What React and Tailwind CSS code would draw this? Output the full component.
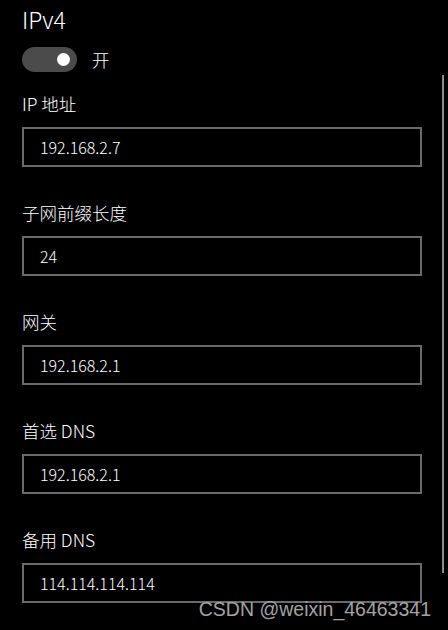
export default function App() {
  const fields = [
    { label: "IP 地址", value: "192.168.2.7" },
    { label: "子网前缀长度", value: "24" },
    { label: "网关", value: "192.168.2.1" },
    { label: "首选 DNS", value: "192.168.2.1" },
    { label: "备用 DNS", value: "114.114.114.114" },
  ];
  const font = { fontFamily: '"Noto Sans CJK SC", "Noto Sans", sans-serif' };
  return (
    <div className="relative w-[448px] h-[630px] bg-black overflow-hidden text-white font-light" style={font}>
      <div className="pl-[22px] pt-[3px] flex flex-col">
        <div className="h-[32px] leading-[32px] text-[23px]">IPv4</div>
        <div className="mt-[12px] flex items-center h-[25px]">
          <div className="w-[55px] h-[25px] rounded-full bg-[#4b4b4b] flex items-center justify-end pr-[7px]">
            <div className="w-[13px] h-[13px] rounded-full bg-white" />
          </div>
          <span className="ml-[15px] text-[17.5px] leading-[25px]">开</span>
        </div>
        <div className="mt-[20px] flex flex-col gap-[34px]">
          {fields.map((f) => (
            <div key={f.label} className="flex flex-col">
              <div className="h-[24px] leading-[24px] text-[17.5px]">{f.label}</div>
              <div className="mt-[11px] w-[400px] h-[40px] border-2 border-[#6a6a6a] flex items-center pl-[16px] text-[16px]">
                {f.value}
              </div>
            </div>
          ))}
        </div>
      </div>
      <div className="absolute left-[442px] top-[75px] w-[2px] h-[498px] bg-[#8a8a8a]" />
      <div
        className="absolute right-[17px] top-[600px] text-[19.5px] leading-[19px] text-[#a3a3a3] whitespace-nowrap"
        style={{ fontFamily: '"Liberation Sans", Arial, sans-serif' }}
      >
        CSDN @weixin_46463341
      </div>
    </div>
  );
}
